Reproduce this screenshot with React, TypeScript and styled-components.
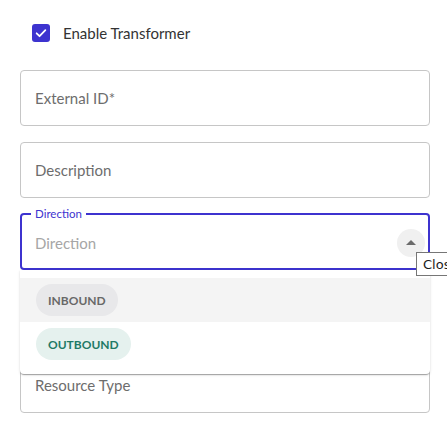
import React from "react";
import styled, { createGlobalStyle } from "styled-components";

const Global = createGlobalStyle`
  html, body {
    margin: 0;
    padding: 0;
    background: #ffffff;
    overflow: hidden;
  }
  body {
    font-family: Lato, "Liberation Sans", sans-serif;
  }
  * { box-sizing: border-box; }
`;

const PRIMARY = "#3d33cf";

const Form = styled.div`
  width: 447px;
  height: 441px;
  padding: 15px 17px 0 20px;
  display: flex;
  flex-direction: column;
`;

const CheckRow = styled.label`
  display: flex;
  align-items: center;
  height: 36px;
  padding-left: 12px;
  gap: 13px;
  margin-bottom: 19px;
  font-size: 15px;
  color: #333333;
`;

const CheckBox = styled.span`
  width: 18px;
  height: 18px;
  border-radius: 3px;
  background: ${PRIMARY};
  display: flex;
  align-items: center;
  justify-content: center;
`;

const TextField = styled.div<{ $gap?: number }>`
  height: 56px;
  border: 1px solid #c6c6c6;
  border-radius: 4px;
  padding: 0 14px;
  display: flex;
  align-items: center;
  font-size: 15px;
  color: #6d6d6d;
  margin-bottom: ${(p) => p.$gap ?? 0}px;
`;

const SelectControl = styled.div`
  position: relative;
  margin-top: 9px;
`;

const Outline = styled.fieldset`
  margin: 0;
  padding: 0 3px 0 9px;
  border: 2px solid ${PRIMARY};
  border-radius: 4px;
  min-width: 0;
`;

const Legend = styled.legend`
  padding: 0 4px;
  font-size: 11.5px;
  line-height: 14px;
  color: ${PRIMARY};
`;

const SelectInner = styled.div`
  height: 47px;
  padding: 0 0 4px 4px;
  display: flex;
  align-items: center;
  justify-content: space-between;
`;

const Placeholder = styled.span`
  font-size: 15px;
  color: #a6a6a6;
`;

const ArrowButton = styled.span`
  width: 28px;
  height: 28px;
  border-radius: 50%;
  background: #f0f0f0;
  display: flex;
  align-items: center;
  justify-content: center;
`;

const Menu = styled.div`
  position: absolute;
  top: 100%;
  left: 0;
  right: 0;
  background: #ffffff;
  border-radius: 0 0 4px 4px;
  padding: 8px 0;
  box-shadow: 0 2px 1px -1px rgba(0, 0, 0, 0.2), 0 1px 1px 0 rgba(0, 0, 0, 0.14),
    0 1px 3px 0 rgba(0, 0, 0, 0.12);
  z-index: 2;
`;

const MenuItem = styled.div<{ $hover?: boolean }>`
  height: 44px;
  display: flex;
  align-items: center;
  padding-left: 16px;
  background: ${(p) => (p.$hover ? "#f4f4f4" : "transparent")};
`;

const Chip = styled.span<{ $tone: "neutral" | "teal" }>`
  height: 32px;
  border-radius: 16px;
  padding: 0 12px;
  display: inline-flex;
  align-items: center;
  font-size: 12px;
  font-weight: 700;
  letter-spacing: 0;
  background: ${(p) => (p.$tone === "teal" ? "#e5f1ee" : "#e8e8ea")};
  color: ${(p) => (p.$tone === "teal" ? "#1f7a66" : "#686868")};
`;

const Tooltip = styled.div`
  position: absolute;
  left: 396px;
  top: 45px;
  height: 24px;
  padding: 0 6px;
  display: flex;
  align-items: center;
  background: #ffffff;
  border: 1px solid #767676;
  font-family: "DejaVu Sans", "Liberation Sans", sans-serif;
  font-size: 13px;
  color: #1a1a1a;
  white-space: nowrap;
  z-index: 3;
`;

export default function App() {
  return (
    <>
      <Global />
      <Form>
        <CheckRow>
          <CheckBox>
            <svg width="14" height="14" viewBox="0 0 24 24">
              <path
                d="M4.5 12.5l5 5L19.5 7"
                fill="none"
                stroke="#ffffff"
                strokeWidth="3"
                strokeLinecap="round"
                strokeLinejoin="round"
              />
            </svg>
          </CheckBox>
          Enable Transformer
        </CheckRow>
        <TextField $gap={16}>External ID*</TextField>
        <TextField>Description</TextField>
        <SelectControl>
          <Outline>
            <Legend>Direction</Legend>
            <SelectInner>
              <Placeholder>Direction</Placeholder>
              <ArrowButton>
                <svg width="24" height="24" viewBox="0 0 24 24">
                  <path d="M7 14l5-5 5 5z" fill="#6b6b6b" />
                </svg>
              </ArrowButton>
            </SelectInner>
          </Outline>
          <Menu>
            <MenuItem $hover>
              <Chip $tone="neutral">INBOUND</Chip>
            </MenuItem>
            <MenuItem>
              <Chip $tone="teal">OUTBOUND</Chip>
            </MenuItem>
          </Menu>
          <Tooltip>Close</Tooltip>
        </SelectControl>
        <TextField style={{ marginTop: 87 }}>Resource Type</TextField>
      </Form>
    </>
  );
}
